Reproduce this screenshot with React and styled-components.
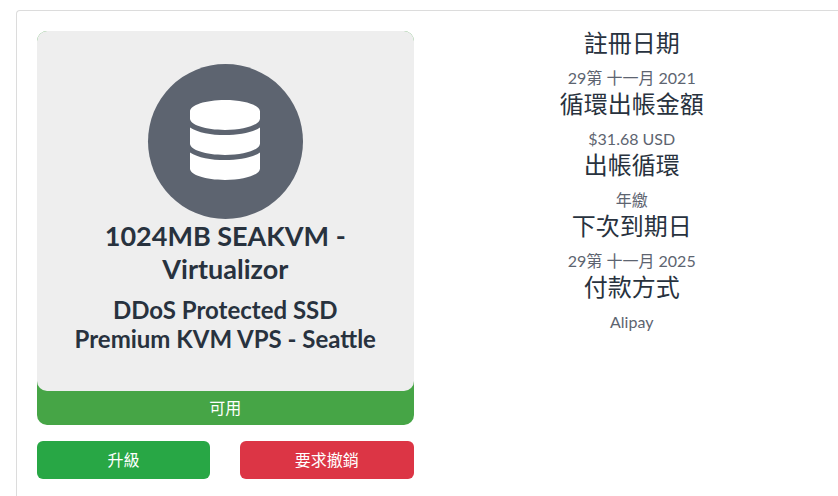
import React from "react";
import styled, { createGlobalStyle } from "styled-components";
import { FaDatabase } from "react-icons/fa";

const GlobalStyle = createGlobalStyle`
  *, *::before, *::after { box-sizing: border-box; }
  body {
    margin: 0;
    background: #fff;
    color: #5d6470;
    font-family: Lato, "Noto Sans CJK TC", sans-serif;
    font-size: 16px;
    line-height: 24px;
    overflow-x: hidden;
  }
`;

const Card = styled.main`
  margin: 10px 0 0 16px;
  min-height: calc(100vh - 10px);
  padding: 20px 18px 16px 20px;
  border: 1px solid #dcdcdc;
  border-width: 1px 0 0 1px;
  border-top-left-radius: 4px;
`;

const Columns = styled.div`
  display: grid;
  grid-template-columns: repeat(2, minmax(0, 1fr));
  gap: 30px;
`;

const StatusCard = styled.section`
  margin-bottom: 16px;
  border-radius: 10px;
  background: #46a546;
  text-align: center;
`;

const Product = styled.div`
  display: flex;
  flex-direction: column;
  align-items: center;
  padding: 33px 20px 38px;
  border-radius: 10px;
  background: #eee;
  color: #28323e;
`;

const IconCircle = styled.div`
  display: grid;
  place-items: center;
  width: 155px;
  height: 155px;
  border-radius: 50%;
  background: #5d6470;
  color: #fff;
  font-size: 80px;

  svg {
    display: block;
    margin-bottom: 4px;
  }
`;

const ProductName = styled.h3`
  max-width: 310px;
  margin: 0 0 10px;
  font-size: 27px;
  font-weight: 700;
  line-height: 33px;
`;

const ProductGroup = styled.h4`
  max-width: 310px;
  margin: 0;
  font-size: 24px;
  font-weight: 700;
  line-height: 29px;
`;

const Status = styled.div`
  padding: 5px;
  color: #fff;
`;

const Actions = styled.div`
  display: grid;
  grid-template-columns: 1fr 1fr;
  gap: 30px;
`;

const Action = styled.button`
  height: 38px;
  border: 0;
  border-radius: 6px;
  background: ${({ $danger }) => ($danger ? "#dc3545" : "#28a745")};
  color: #fff;
  font: inherit;
  cursor: pointer;
`;

const Details = styled.dl`
  margin: 0;
  text-align: center;
`;

const Term = styled.dt`
  margin-bottom: 11px;
  color: #28323e;
  font-size: 24px;
  line-height: 24px;
`;

const Value = styled.dd`
  margin: 0 0 2px;
`;

const details = [
  ["註冊日期", "29第 十一月 2021"],
  ["循環出帳金額", "$31.68 USD"],
  ["出帳循環", "年繳"],
  ["下次到期日", "29第 十一月 2025"],
  ["付款方式", "Alipay"],
];

export default function App() {
  return (
    <>
      <GlobalStyle />
      <Card lang="zh-Hant">
        <Columns>
          <div>
            <StatusCard>
              <Product>
                <IconCircle>
                  <FaDatabase aria-hidden="true" />
                </IconCircle>
                <ProductName>1024MB SEAKVM - Virtualizor</ProductName>
                <ProductGroup>DDoS Protected SSD Premium KVM VPS - Seattle</ProductGroup>
              </Product>
              <Status>可用</Status>
            </StatusCard>
            <Actions>
              <Action type="button">升級</Action>
              <Action type="button" $danger>要求撤銷</Action>
            </Actions>
          </div>
          <Details>
            {details.map(([term, value]) => (
              <React.Fragment key={term}>
                <Term>{term}</Term>
                <Value>{value}</Value>
              </React.Fragment>
            ))}
          </Details>
        </Columns>
      </Card>
    </>
  );
}
